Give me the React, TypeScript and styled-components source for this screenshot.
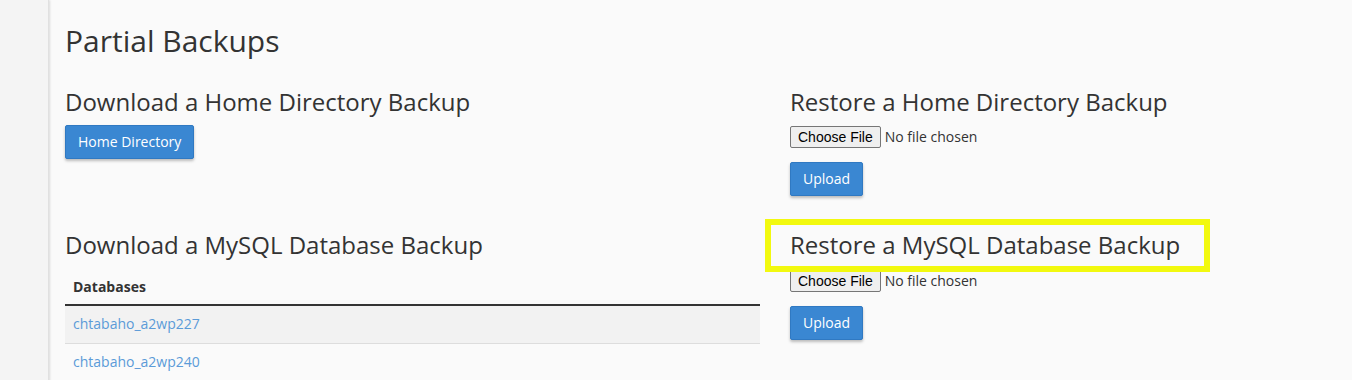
import styled, { createGlobalStyle } from 'styled-components';

const GlobalStyle = createGlobalStyle`
  body {
    margin: 0;
    background: #fafafa;
    font-family: "Open Sans", "Liberation Sans", sans-serif;
    color: #333;
  }
`;

const Page = styled.div`
  display: flex;
  min-height: 380px;
`;

const Sidebar = styled.div`
  width: 48px;
  flex: none;
  background: #f4f4f4;
  border-right: 1px solid #e0e0e0;
  box-shadow: 1px 0 2px rgba(0, 0, 0, 0.12);
`;

const Main = styled.main`
  flex: 1;
  padding: 24px 15px 0 16px;
`;

const Title = styled.h1`
  margin: 0 0 32px;
  font-size: 30px;
  font-weight: 400;
  line-height: 33px;
  color: #333;
`;

const Grid = styled.div`
  display: grid;
  grid-template-columns: 695px 1fr;
  column-gap: 30px;
  row-gap: 36px;
`;

const Section = styled.section``;

const Heading = styled.h2`
  margin: 0 0 10px;
  font-size: 24px;
  font-weight: 400;
  line-height: 26.4px;
  color: #333;
`;

const HighlightRow = styled.div`
  margin-bottom: 10px;
`;

const Highlight = styled.div`
  position: relative;
  display: inline-block;
  vertical-align: top;

  ${Heading} {
    margin: 0;
  }

  &::after {
    content: '';
    position: absolute;
    inset: -13px -30px -13px -25px;
    border: 6px solid #f2f90f;
    pointer-events: none;
  }
`;

const Button = styled.button`
  display: inline-block;
  padding: 6px 12px;
  font-family: "Open Sans", "Liberation Sans", sans-serif;
  font-size: 14px;
  line-height: 20px;
  color: #fff;
  background: #3a87d2;
  border: 1px solid #3079c2;
  border-radius: 2px;
  box-shadow: 0 2px 3px rgba(0, 0, 0, 0.25);
  cursor: pointer;
`;

const FileRow = styled.div`
  margin: 1px 0 15px;
  height: 22px;
`;

const FileInput = styled.input`
  font-family: "Open Sans", "Liberation Sans", sans-serif;
  font-size: 14px;
  color: #333;

  &::file-selector-button {
    height: 22px;
    margin-right: 4px;
    padding: 1px 7px;
    font-family: "Liberation Sans", Arial, sans-serif;
    font-size: 14px;
    color: #000;
    background: #efefef;
    border: 1px solid #767676;
    border-radius: 2px;
  }
`;

const Table = styled.table`
  width: 100%;
  margin-top: 9px;
  border-collapse: collapse;
  font-size: 14px;
`;

const Th = styled.th`
  padding: 8px 8px 7px;
  text-align: left;
  font-weight: 700;
  line-height: 20px;
  color: #333;
  border-bottom: 2px solid #333;
`;

const Tr = styled.tr<{ $striped?: boolean }>`
  background: ${(p) => (p.$striped ? '#f2f2f2' : 'transparent')};
`;

const Td = styled.td`
  padding: 8px 8px 10px;
  line-height: 19px;
  border-bottom: 1px solid #ddd;
`;

const DbLink = styled.a`
  color: #5b9bd8;
  text-decoration: none;
`;

const databases = ['chtabaho_a2wp227', 'chtabaho_a2wp240'];

const RestoreForm = () => (
  <>
    <FileRow>
      <FileInput type="file" />
    </FileRow>
    <Button>Upload</Button>
  </>
);

export default function App() {
  return (
    <Page>
      <GlobalStyle />
      <Sidebar />
      <Main>
        <Title>Partial Backups</Title>
        <Grid>
          <Section>
            <Heading>Download a Home Directory Backup</Heading>
            <Button>Home Directory</Button>
          </Section>
          <Section>
            <Heading>Restore a Home Directory Backup</Heading>
            <RestoreForm />
          </Section>
          <Section>
            <Heading>Download a MySQL Database Backup</Heading>
            <Table>
              <thead>
                <tr>
                  <Th>Databases</Th>
                </tr>
              </thead>
              <tbody>
                {databases.map((db, i) => (
                  <Tr key={db} $striped={i % 2 === 0}>
                    <Td>
                      <DbLink href="#">{db}</DbLink>
                    </Td>
                  </Tr>
                ))}
              </tbody>
            </Table>
          </Section>
          <Section>
            <HighlightRow>
              <Highlight>
                <Heading>Restore a MySQL Database Backup</Heading>
              </Highlight>
            </HighlightRow>
            <RestoreForm />
          </Section>
        </Grid>
      </Main>
    </Page>
  );
}
